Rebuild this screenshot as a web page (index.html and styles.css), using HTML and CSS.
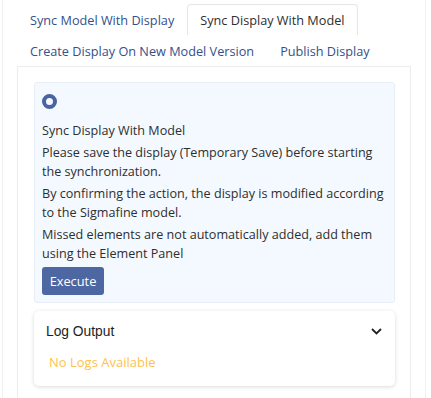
FILE: index.html
```html
<!DOCTYPE html>
<html>
<head>
<meta charset="utf-8">
<link rel="stylesheet" href="styles.css">
</head>
<body>
<div class="panel">
  <div class="tabs">
    <div class="tab-row">
      <div class="tab">Sync Model With Display</div>
      <div class="tab active">Sync Display With Model</div>
    </div>
    <div class="tab-row">
      <div class="tab">Create Display On New Model Version</div>
      <div class="tab">Publish Display</div>
    </div>
  </div>
  <div class="tab-content">
    <div class="action-card">
      <span class="radio"></span>
      <p class="title">Sync Display With Model</p>
      <p class="para">Please save the display (Temporary Save) before starting the synchronization.</p>
      <p class="para">By confirming the action, the display is modified according to the Sigmafine model.</p>
      <p class="para">Missed elements are not automatically added, add them using the Element Panel</p>
      <button class="btn">Execute</button>
    </div>
    <div class="log-card">
      <div class="log-head">
        <span class="log-title">Log Output</span>
        <svg class="chev" width="11" height="7" viewBox="0 0 11 7"><path d="M1 1 L5.5 5.5 L10 1" fill="none" stroke="#222" stroke-width="1.8"/></svg>
      </div>
      <div class="log-empty">No Logs Available</div>
    </div>
  </div>
</div>
</body>
</html>
```
FILE: styles.css
```css
html, body {
  margin: 0;
  padding: 0;
  background: #fff;
}
body {
  font-family: "Open Sans", "Noto Sans", sans-serif;
  color: #2e2e2e;
}
.panel {
  margin-left: 2px;
  width: 424px;
  height: 398px;
  border-left: 1px solid #f0f0f0;
  border-right: 1px solid #f0f0f0;
  padding: 4px 14px 0 14px;
  box-sizing: border-box;
}
.tabs {
  display: flex;
  flex-direction: column;
}
.tab-row {
  display: flex;
  height: 31px;
}
.tab {
  padding: 0 12px;
  font-size: 12.7px;
  line-height: 31px;
  color: #34508a;
  border: 1px solid transparent;
  border-bottom: none;
  border-radius: 4px 4px 0 0;
  white-space: nowrap;
}
.tab.active {
  border-color: #e6e6e6;
  background: #fff;
  color: #2e2e2e;
  position: relative;
  z-index: 1;
}
.tab-content {
  border: 1px solid #ececec;
  border-bottom: none;
  padding: 15px 15px 0 16px;
  height: 340px;
  box-sizing: border-box;
}
.action-card {
  background: #f4f9ff;
  border: 1px solid #e8eef5;
  border-radius: 3px;
  padding: 11px 4px 7px 7px;
  display: flex;
  flex-direction: column;
  align-items: flex-start;
}
.radio {
  width: 15px;
  height: 15px;
  border: 4px solid #4a64a0;
  border-radius: 50%;
  box-sizing: border-box;
  margin-bottom: 12px;
}
.title, .para {
  margin: 0;
  font-size: 12.6px;
  line-height: 19px;
  color: #2e2e2e;
}
.title {
  margin-bottom: 3px;
}
.para {
  margin-bottom: 3px;
}
.btn {
  margin-top: 1px;
  background: #4c67a2;
  color: #fff;
  border: none;
  border-radius: 3px;
  font-family: inherit;
  font-size: 12.8px;
  height: 28px;
  width: 62px;
  padding: 0;
}
.log-card {
  margin-top: 8px;
  background: #fff;
  border-radius: 5px;
  box-shadow: 0 1px 4px rgba(0,0,0,0.15);
  padding: 10px 12px 12px 12px;
  height: 75px;
  box-sizing: border-box;
}
.log-head {
  display: flex;
  justify-content: space-between;
  align-items: center;
  height: 20px;
}
.log-title {
  font-family: "Liberation Sans", Arial, sans-serif;
  font-size: 13.8px;
  color: #1e1e1e;
}
.chev {
  margin-right: 1px;
}
.log-empty {
  margin-top: 12px;
  padding-left: 3px;
  font-size: 13px;
  color: #ffc24d;
}
```
